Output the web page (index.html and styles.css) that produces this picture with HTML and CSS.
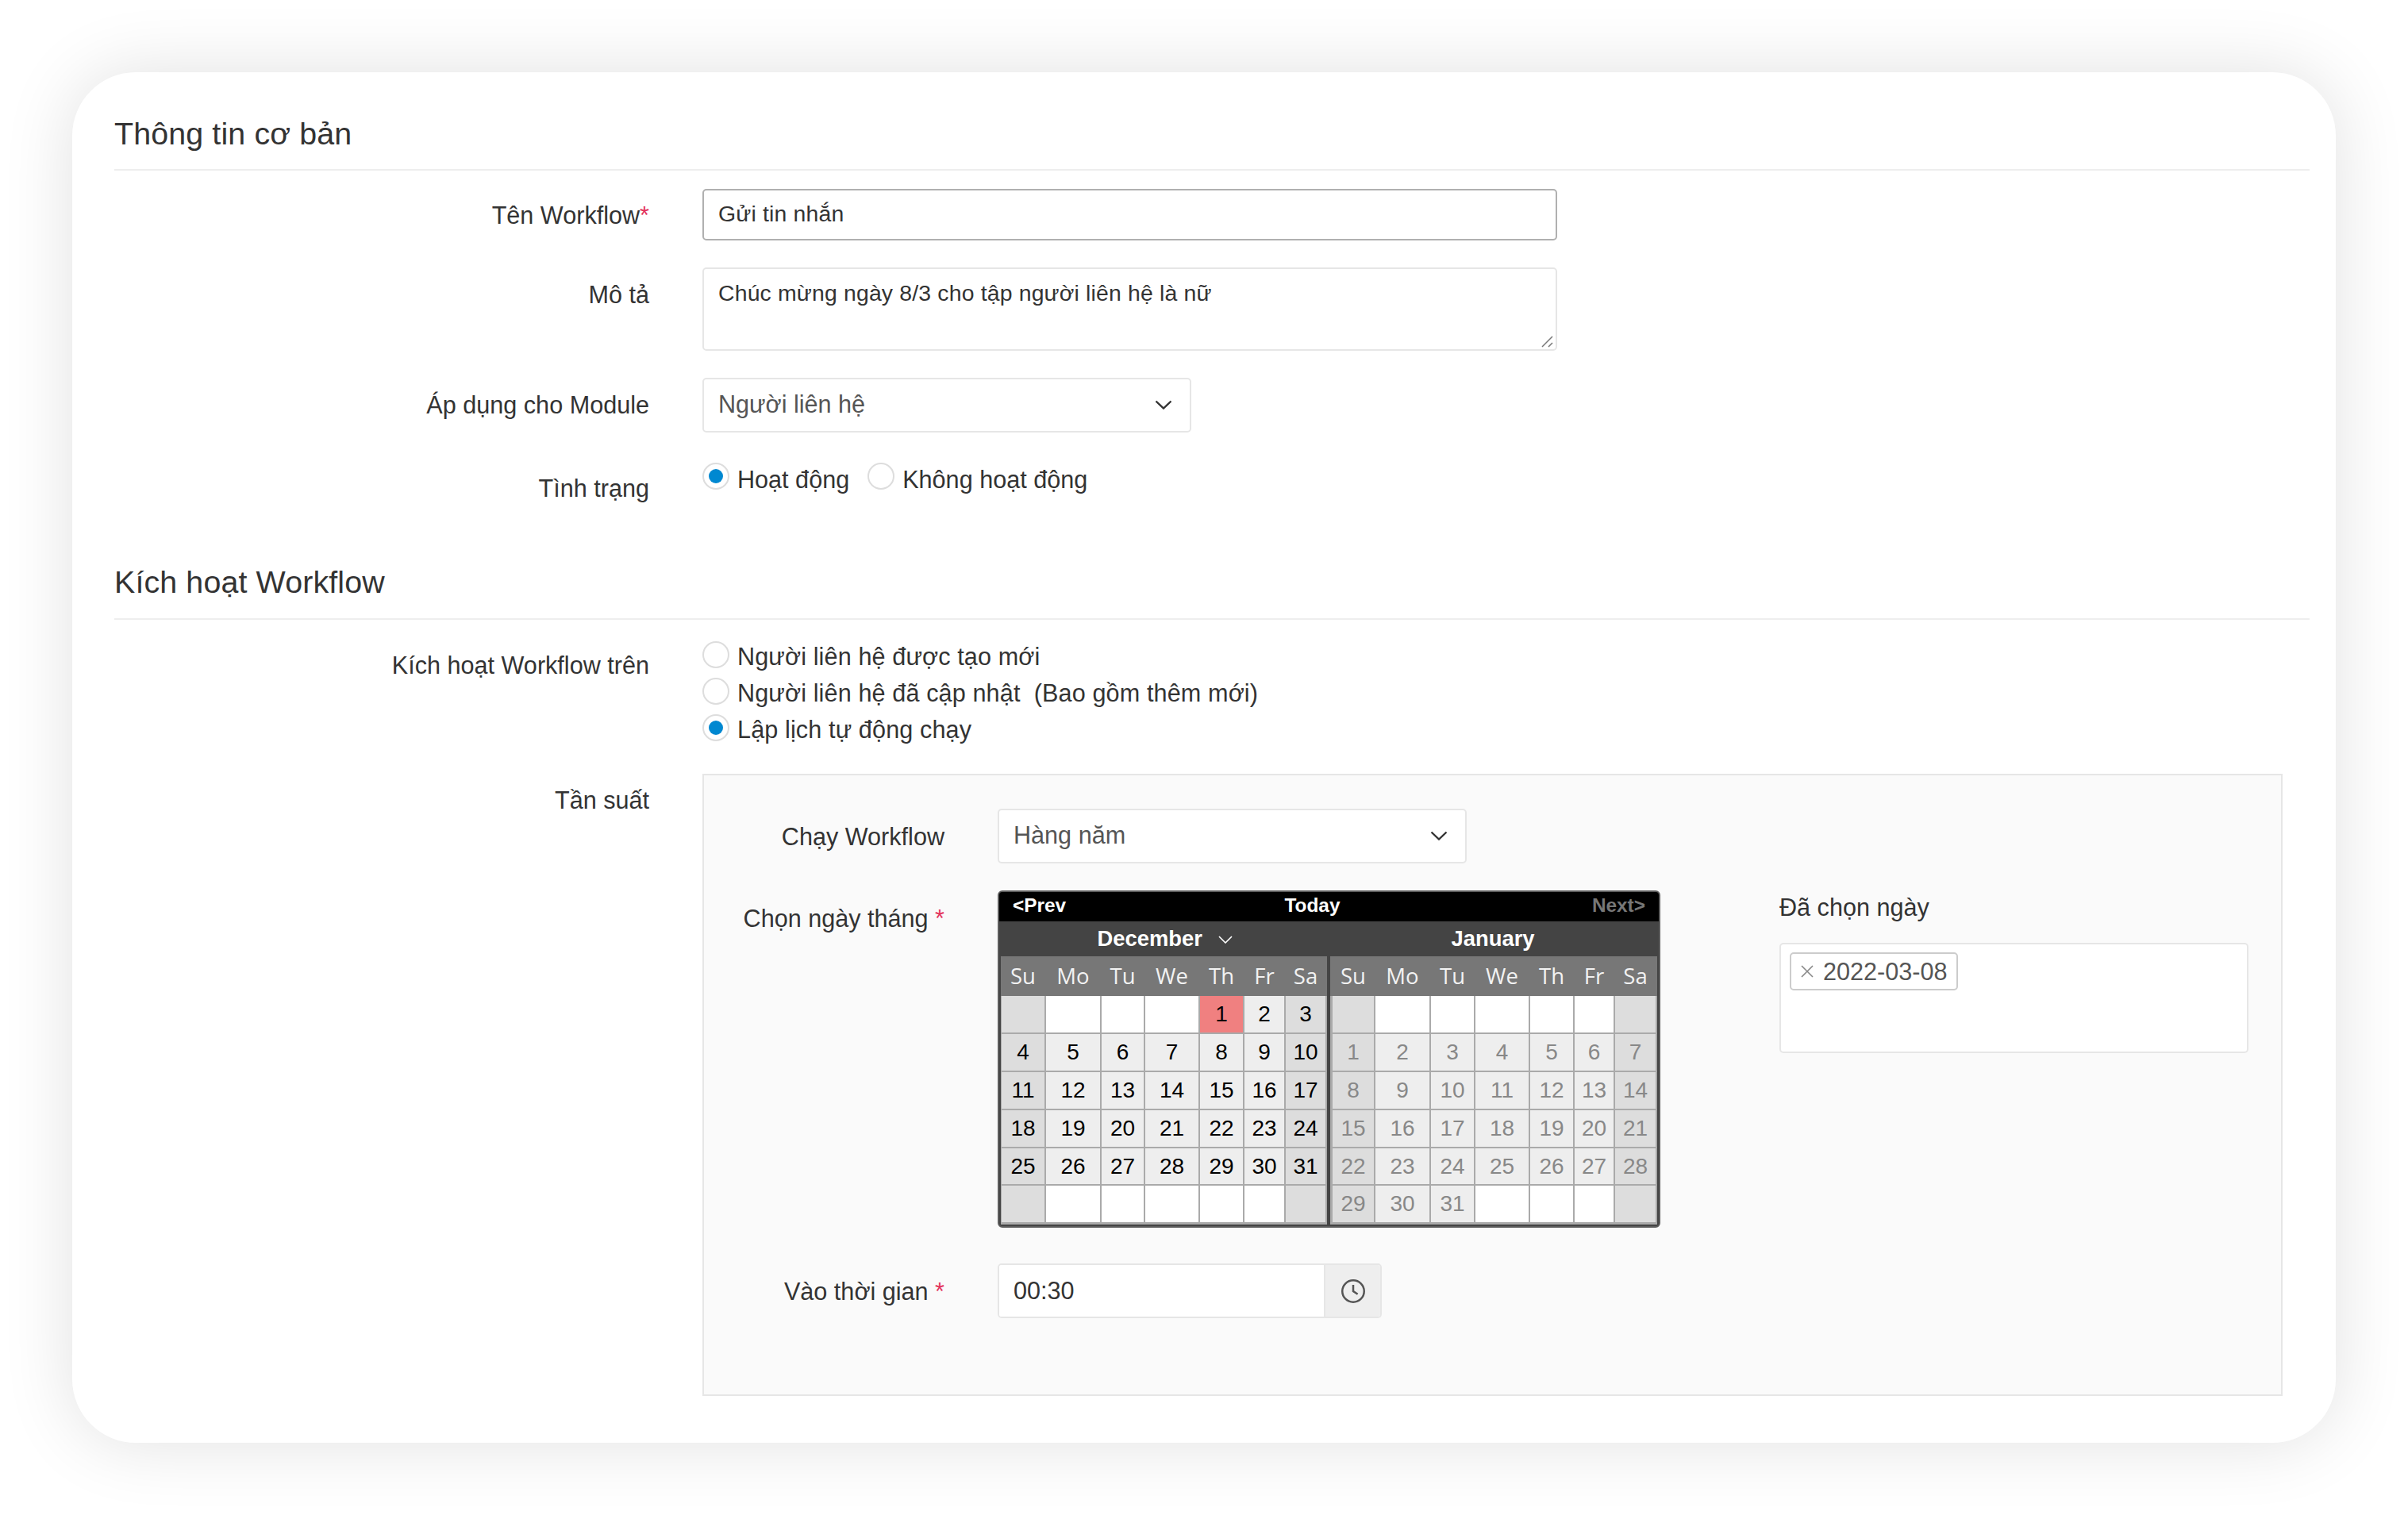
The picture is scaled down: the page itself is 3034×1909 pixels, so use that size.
FILE: index.html
```html
<!DOCTYPE html>
<html lang="vi">
<head>
<meta charset="utf-8">
<title>Workflow</title>
<link rel="stylesheet" href="styles.css">
</head>
<body>
<main class="card">
  <h2 class="section-title">Thông tin cơ bản</h2>
  <div class="row">
    <div class="label">Tên Workflow<span class="req">*</span></div>
    <div class="field input active">Gửi tin nhắn</div>
  </div>
  <div class="row">
    <div class="label label-low">Mô tả</div>
    <div class="field textarea">Chúc mừng ngày 8/3 cho tập người liên hệ là nữ
      <svg class="grip" viewBox="0 0 15 15"><path d="M1 14 14 1M9 14 14 9"/></svg>
    </div>
  </div>
  <div class="row">
    <div class="label label-low">Áp dụng cho Module</div>
    <div class="field select select-module">Người liên hệ
      <svg class="chev" viewBox="0 0 22 12"><path d="M1.5 1.5 11 10.5 20.5 1.5"/></svg>
    </div>
  </div>
  <div class="row row-status">
    <div class="label label-status">Tình trạng</div>
    <div class="inline-opts">
      <div class="opt"><span class="radio on"></span><span class="opt-text">Hoạt động</span></div>
      <div class="opt"><span class="radio"></span><span class="opt-text">Không hoạt động</span></div>
    </div>
  </div>

  <h2 class="section-title second">Kích hoạt Workflow</h2>
  <div class="row row-trigger">
    <div class="label label-trigger">Kích hoạt Workflow trên</div>
    <div class="stack-opts">
      <div class="opt"><span class="radio"></span><span class="opt-text">Người liên hệ được tạo mới</span></div>
      <div class="opt"><span class="radio"></span><span class="opt-text">Người liên hệ đã cập nhật&nbsp; (Bao gồm thêm mới)</span></div>
      <div class="opt"><span class="radio on"></span><span class="opt-text">Lập lịch tự động chạy</span></div>
    </div>
  </div>
  <div class="row row-freq">
    <div class="label">Tần suất</div>
    <section class="panel">
      <div class="prow">
        <div class="plabel plabel-mid">Chạy Workflow</div>
        <div class="field select select-run">Hàng năm
          <svg class="chev" viewBox="0 0 22 12"><path d="M1.5 1.5 11 10.5 20.5 1.5"/></svg>
        </div>
      </div>
      <div class="prow prow-cal">
        <div class="plabel plabel-cal">Chọn ngày tháng <span class="req">*</span></div>
        <div class="cal">
          <div class="cal-nav"><span>&lt;Prev</span><span class="today">Today</span><span class="next">Next&gt;</span></div>
          <div class="cal-months">
            <div class="cal-month-name">December <svg class="cal-chev" viewBox="0 0 18 10"><path d="M1 1 9 9 17 1"/></svg></div>
            <div class="cal-month-name">January</div>
          </div>
          <div class="cal-body">
            <div class="month month-a">
              <div class="dow"><span>Su</span><span>Mo</span><span>Tu</span><span>We</span><span>Th</span><span>Fr</span><span>Sa</span></div>
              <div class="days">
                <span class="we"></span><span class="nil"></span><span class="nil"></span><span class="nil"></span><span class="sel">1</span><span>2</span><span class="we">3</span>
                <span class="we">4</span><span>5</span><span>6</span><span>7</span><span>8</span><span>9</span><span class="we">10</span>
                <span class="we">11</span><span>12</span><span>13</span><span>14</span><span>15</span><span>16</span><span class="we">17</span>
                <span class="we">18</span><span>19</span><span>20</span><span>21</span><span>22</span><span>23</span><span class="we">24</span>
                <span class="we">25</span><span>26</span><span>27</span><span>28</span><span>29</span><span>30</span><span class="we">31</span>
                <span class="we"></span><span class="nil"></span><span class="nil"></span><span class="nil"></span><span class="nil"></span><span class="nil"></span><span class="we"></span>
              </div>
            </div>
            <div class="month month-b">
              <div class="dow"><span>Su</span><span>Mo</span><span>Tu</span><span>We</span><span>Th</span><span>Fr</span><span>Sa</span></div>
              <div class="days">
                <span class="we"></span><span class="nil"></span><span class="nil"></span><span class="nil"></span><span class="nil"></span><span class="nil"></span><span class="we"></span>
                <span class="we">1</span><span>2</span><span>3</span><span>4</span><span>5</span><span>6</span><span class="we">7</span>
                <span class="we">8</span><span>9</span><span>10</span><span>11</span><span>12</span><span>13</span><span class="we">14</span>
                <span class="we">15</span><span>16</span><span>17</span><span>18</span><span>19</span><span>20</span><span class="we">21</span>
                <span class="we">22</span><span>23</span><span>24</span><span>25</span><span>26</span><span>27</span><span class="we">28</span>
                <span class="we">29</span><span>30</span><span>31</span><span class="nil"></span><span class="nil"></span><span class="nil"></span><span class="we"></span>
              </div>
            </div>
          </div>
        </div>
        <div class="side">
          <div class="side-title">Đã chọn ngày</div>
          <div class="side-box">
            <span class="tag"><svg class="tag-x" viewBox="0 0 18 18"><path d="M2 2 16 16M16 2 2 16"/></svg>2022-03-08</span>
          </div>
        </div>
      </div>
      <div class="prow prow-time">
        <div class="plabel plabel-mid">Vào thời gian <span class="req">*</span></div>
        <div class="time">
          <div class="time-value">00:30</div>
          <div class="time-addon">
            <svg class="clock" viewBox="0 0 24 24"><circle cx="12" cy="12" r="11"/><path d="M12 5.5V12L16.5 15"/></svg>
          </div>
        </div>
      </div>
    </section>
  </div>
</main>
</body>
</html>
```

FILE: styles.css
```css
* { box-sizing: border-box; }
html, body { margin: 0; background: #fff; }
body {
  width: 3034px;
  height: 1909px;
  padding: 91px;
  font-family: "Liberation Sans", Arial, sans-serif;
  font-size: 30.6px;
  color: #333;
  overflow: hidden;
}
.card {
  width: 2852px;
  height: 1727px;
  padding: 55px 33px 0 53px;
  background: #fff;
  border-radius: 80px;
  box-shadow: 0 0 90px rgba(0, 0, 0, .12);
}
.section-title {
  margin: 0 0 23px;
  padding-bottom: 23px;
  border-bottom: 2px solid #eee;
  font-size: 39.4px;
  font-weight: 400;
  letter-spacing: .12px;
  line-height: 44px;
}
.section-title.second { margin: 74px 0 26px; padding-bottom: 24px; }
.row {
  display: grid;
  grid-template-columns: 674px 1fr;
  column-gap: 67px;
  align-items: start;
  margin-bottom: 34px;
}
.row-status { margin-top: 38px; margin-bottom: 0; }
.row-trigger { margin-top: 27px; margin-bottom: 37px; }
.row-freq { margin-bottom: 0; }
.label {
  padding-top: 11px;
  line-height: 44px;
  text-align: right;
}
.label-low { padding-top: 12px; }
.label-status { padding-top: 10px; }
.label-trigger { padding-top: 8px; }
.req { color: #e3335c; }
.field {
  position: relative;
  background: #fff;
  border: 2px solid #e6e6e6;
  border-radius: 5px;
  padding-left: 18px;
}
.input {
  width: 1077px;
  height: 65px;
  line-height: 59px;
  font-size: 28.4px;
  letter-spacing: .17px;
}
.input.active { border-color: #b0b0b0; }
.textarea {
  width: 1077px;
  height: 105px;
  padding-top: 12px;
  line-height: 36px;
  font-size: 28.4px;
  letter-spacing: .17px;
}
.grip {
  position: absolute;
  right: 3px;
  bottom: 2px;
  width: 15px;
  height: 15px;
  fill: none;
  stroke: #777;
  stroke-width: 1.5;
}
.select {
  height: 69px;
  line-height: 62px;
  color: #555;
}
.select-module { width: 616px; }
.select-run { width: 591px; }
.chev {
  position: absolute;
  right: 22px;
  top: 26px;
  width: 22px;
  height: 12px;
  fill: none;
  stroke: #333;
  stroke-width: 2.4;
}
.inline-opts { display: flex; gap: 23px; }
.stack-opts { display: flex; flex-direction: column; gap: 8px; letter-spacing: .12px; }
.stack-opts .opt-text { padding-top: 2px; padding-bottom: 2px; }
.opt { display: flex; align-items: flex-start; gap: 10px; }
.opt-text { padding-top: 4px; line-height: 34px; white-space: nowrap; }
.radio {
  position: relative;
  flex: none;
  width: 34px;
  height: 34px;
  background: #fff;
  border: 2px solid #ddd;
  border-radius: 50%;
}
.radio.on::after {
  content: "";
  position: absolute;
  left: 6px;
  top: 6px;
  width: 18px;
  height: 18px;
  border-radius: 50%;
  background: #0088d1;
}
.panel {
  width: 1991px;
  height: 784px;
  padding-top: 42px;
  background: #fafafa;
  border: 2px solid #e6e6e6;
}
.prow { display: flex; align-items: flex-start; }
.prow-cal { margin-top: 34px; }
.prow-time { margin-top: 45px; }
.plabel {
  flex: none;
  width: 303px;
  margin-right: 67px;
  line-height: 44px;
  text-align: right;
}
.plabel-mid { padding-top: 13px; }
.plabel-cal { padding-top: 13px; }

.cal {
  flex: none;
  width: 835px;
  height: 425px;
  border: 2px solid #5c5c5c;
  border-radius: 6px;
  background: #444;
  overflow: hidden;
}
.cal-nav {
  display: grid;
  grid-template-columns: 1fr auto 1fr;
  height: 37px;
  padding: 0 17px;
  background: #000;
  color: #fff;
  font-size: 24.4px;
  font-weight: 700;
  line-height: 34px;
}
.today { padding-right: 42px; }
.next { color: #777; text-align: right; }
.cal-months {
  display: flex;
  height: 44px;
  padding: 0 2px;
  color: #fff;
  font-size: 27.4px;
  font-weight: 700;
  line-height: 44px;
  text-align: center;
}
.cal-month-name { width: 413px; }
.cal-month-name + .cal-month-name { flex: 1; }
.cal-chev {
  width: 18px;
  height: 10px;
  margin-left: 12px;
  vertical-align: 3px;
  fill: none;
  stroke: #fff;
  stroke-width: 1.6;
}
.cal-body {
  display: flex;
  gap: 4px;
  padding: 0 2px;
}
.month { width: 411px; }
.month-b { width: 412px; }
.dow, .days { display: grid; column-gap: 2px; }
.month-a .dow, .month-a .days { grid-template-columns: 54px 68px 53px 67px 54px 50px 50px; }
.month-b .dow, .month-b .days { grid-template-columns: 52px 68px 54px 67px 54px 49px 51px; }
.dow {
  height: 50px;
  background: #777;
  color: #f2f2f2;
  font-family: "Open Sans", sans-serif;
  font-size: 27.5px;
  line-height: 50px;
  text-align: center;
}
.month-a .dow { padding: 0 2px 0 1px; }
.month-b .dow { padding: 0 2px 0 3px; }
.days {
  grid-template-rows: 46px 46px 46px 46px 45px 46px;
  row-gap: 2px;
  height: 288px;
  background: #aaa;
  padding-bottom: 3px;
  color: #000;
  font-size: 28px;
  line-height: 46px;
  text-align: center;
}
.month-a .days { padding-left: 1px; padding-right: 2px; }
.month-b .days { padding-left: 3px; padding-right: 2px; color: #888; }
.days span { background: #eee; }
.days .we { background: #ddd; }
.days .nil { background: #fff; }
.days .sel { background: #f08080; }

.side { flex: none; width: 591px; margin-left: 150px; }
.side-title { margin-bottom: 22px; line-height: 42px; height: 44px; }
.side-box {
  height: 139px;
  padding: 10px 11px;
  background: #fff;
  border: 2px solid #e6e6e6;
  border-radius: 5px;
}
.tag {
  display: inline-flex;
  align-items: center;
  gap: 11px;
  height: 48px;
  padding: 0 11px 0 11px;
  background: #fff;
  border: 2px solid #ccc;
  border-radius: 5px;
  color: #555;
}
.tag-x {
  width: 18px;
  height: 18px;
  fill: none;
  stroke: #888;
  stroke-width: 1.6;
}
.time {
  display: flex;
  width: 484px;
  height: 69px;
  border: 2px solid #e6e6e6;
  border-radius: 5px;
  overflow: hidden;
}
.time-value {
  flex: 1;
  padding-left: 18px;
  background: #fff;
  line-height: 65px;
}
.time-addon {
  display: flex;
  align-items: center;
  justify-content: center;
  width: 71px;
  background: #eee;
  border-left: 2px solid #e6e6e6;
}
.clock {
  width: 30px;
  height: 30px;
  fill: none;
  stroke: #555;
  stroke-width: 2;
}
```
